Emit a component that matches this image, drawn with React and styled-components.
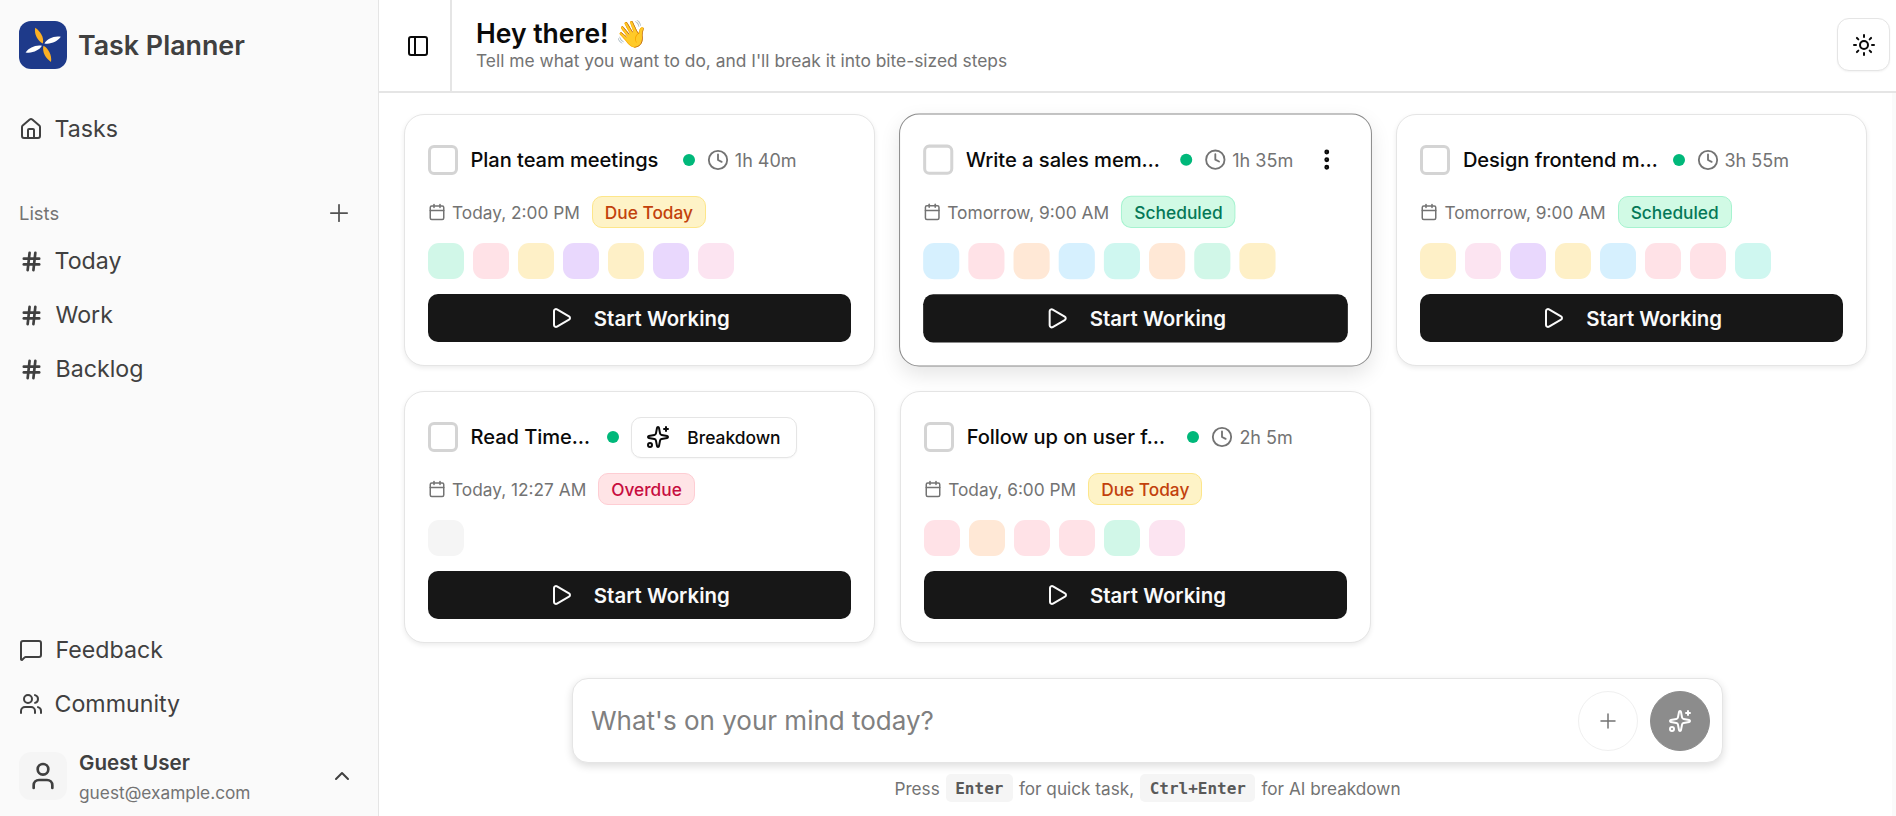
import React from 'react';
import styled, { createGlobalStyle } from 'styled-components';
import { Home, Hash, Plus, MessageSquare, Users, User, ChevronUp, PanelLeft, Sun, Calendar, Clock, Play, Sparkles, EllipsisVertical } from 'lucide-react';

const Global = createGlobalStyle`
  html, body { margin: 0; padding: 0; height: 100%; background: #fff; }
  body { font-family: Inter, "Noto Sans", sans-serif; overflow: hidden; }
  * { box-sizing: border-box; }
`;

const Shell = styled.div`display: flex; width: 1896px; height: 816px; overflow: hidden;`;

const Sidebar = styled.aside`
  width: 379px; flex: none; height: 816px; background: #fafafa; border-right: 1px solid #e5e5e5;
  display: flex; flex-direction: column; padding: 21px 19px 16px; color: #404040;
`;
const Brand = styled.div`display: flex; align-items: center; gap: 11px; height: 48px; margin-bottom: 48px;`;
const BrandName = styled.div`font-size: 26.8px; font-weight: 600; color: #404040;`;
const NavRow = styled.div`
  display: flex; align-items: center; height: 24px; font-size: 23.2px; color: #404040; gap: ${p => p.$gap || 11.5}px;
  margin-bottom: ${p => p.$mb || 0}px;
`;
const IconSlot = styled.span`width: 24px; display: flex; justify-content: center; flex: none; color: #404040;`;
const ListHead = styled.div`
  display: flex; align-items: center; justify-content: space-between; height: 24px; margin: 60px 6px 24px 0;
  font-size: 18.4px; color: #737373;
`;
const Spacer = styled.div`flex: 1;`;
const UserRow = styled.div`display: flex; align-items: center; gap: 12px; height: 48px; margin-top: 36px;`;
const Avatar = styled.div`
  width: 48px; height: 48px; border-radius: 12px; background: #f5f5f5; display: flex; align-items: center; justify-content: center; color: #404040;
`;
const UserText = styled.div`flex: 1; display: flex; flex-direction: column; gap: 7.5px; padding-top: 2px;`;
const UserName = styled.div`font-size: 20.6px; font-weight: 600; color: #404040; line-height: 24px;`;
const UserMail = styled.div`font-size: 17.3px; color: #737373; line-height: 21px;`;

const Main = styled.main`flex: 1; min-width: 0; display: flex; flex-direction: column;`;
const Header = styled.header`
  height: 93px; flex: none; border-bottom: 2px solid #e5e5e5; display: flex; align-items: stretch; padding-right: 6px;
`;
const ToggleCell = styled.div`
  width: 73px; padding-left: 6px; border-right: 2px solid #e5e5e5; display: flex; align-items: center; justify-content: center; color: #0a0a0a;
`;
const HeaderText = styled.div`flex: 1; padding: 15px 0 0 24px;`;
const Heading = styled.h1`
  margin: 0; font-size: 26.5px; font-weight: 600; color: #0a0a0a; line-height: 36px;
`;
const Sub = styled.p`margin: -1px 0 0; font-size: 17.36px; color: #737373; line-height: 22px;`;
const ThemeButton = styled.div`
  width: 53px; height: 53px; margin-top: 18px; border: 1px solid #e5e5e5; border-radius: 12px; background: #fff;
  display: flex; align-items: center; justify-content: center; color: #0a0a0a; box-shadow: 0 1px 2px rgba(0,0,0,.05);
`;

const Board = styled.div`flex: 1; min-height: 0; display: flex; flex-direction: column; padding: 21px 25px 0 25px; border-right: 4px solid #fafafa;`;
const Grid = styled.div`display: grid; grid-template-columns: repeat(3, minmax(0, 1fr)); gap: 25px 25.6px; flex: 1; align-content: start;`;

const Card = styled.div`
  height: 252px; border-radius: 20px; background: #fff; padding: 30px 23px 0 23px;
  border: 1px solid ${p => p.$active ? '#8a8a8a' : '#e5e5e5'};
  box-shadow: ${p => p.$active ? '0 8px 20px rgba(0,0,0,.10)' : '0 2px 5px rgba(0,0,0,.08)'};
  ${p => p.$active && 'transform: scale(1.004);'}
`;
const TitleRow = styled.div`display: flex; align-items: center; height: 30px; position: relative; padding-right: 54px;`;
const Check = styled.div`width: 30px; height: 30px; border: 3px solid #d4d4d4; border-radius: 6px; flex: none; margin-right: 12.5px;`;
const Title = styled.div`
  font-size: 20.1px; font-weight: 500; letter-spacing: -0.05px; color: #0a0a0a; white-space: nowrap; overflow: hidden; text-overflow: ellipsis; min-width: 0; flex: 1 1 0;
`;
const Dot = styled.span`width: 12px; height: 12px; border-radius: 50%; background: #00b87a; flex: none; margin: 0 12px 0 11px;`;
const Duration = styled.div`display: flex; align-items: center; gap: 6px; font-size: 18px; color: #737373; flex: none; white-space: nowrap;`;
const MenuDots = styled.span`position: absolute; right: 8px; top: 2px; width: 26px; height: 26px; color: #0a0a0a; display: flex;`;
const Breakdown = styled.div`
  display: flex; align-items: center; gap: 17px; height: 41px; padding: 0 15px 0 14px; border: 1px solid #e5e5e5; border-radius: 10px;
  font-size: 17.4px; font-weight: 500; color: #0a0a0a; flex: none; background: #fff; white-space: nowrap; box-shadow: 0 1px 2px rgba(0,0,0,.04);
`;
const MetaRow = styled.div`display: flex; align-items: center; height: 32px; margin-top: 21px; font-size: 17.3px; color: #737373;`;
const DateText = styled.span`margin-left: 6px; margin-right: 12px; white-space: nowrap;`;
const TONES = {
  due: ['#fef3c7', '#fde68a', '#c2410c'],
  scheduled: ['#d1fae5', '#a7f3d0', '#047857'],
  overdue: ['#ffe4e6', '#fecdd3', '#c70d3f'],
};
const Badge = styled.span`
  height: 32px; padding: 0 12px; border-radius: 10px; display: inline-flex; align-items: center; font-size: 17.3px; font-weight: 500;
  background: ${p => TONES[p.$tone][0]}; border: 1px solid ${p => TONES[p.$tone][1]}; color: ${p => TONES[p.$tone][2]};
`;
const Swatches = styled.div`display: flex; gap: 9px; margin-top: 15px; height: 36px;`;
const Swatch = styled.span`width: 36px; height: 36px; border-radius: 11px; background: ${p => p.$c};`;
const StartButton = styled.div`
  margin-top: 15px; height: 48px; border-radius: 10px; background: #171717; color: #fafafa; display: flex; align-items: center; justify-content: center;
  gap: 21px; font-size: 20.4px; font-weight: 600;
`;

const Composer = styled.div`margin: 0 0 0 168px; width: 1151px; flex: none;`;
const InputBox = styled.div`
  height: 85px; border: 1px solid #e5e5e5; border-radius: 16px; background: #fff; box-shadow: 0 3px 8px rgba(0,0,0,.14);
  display: flex; align-items: center; padding: 0 12px 0 18px; gap: 12px;
`;
const Placeholder = styled.div`flex: 1; font-size: 26px; color: #808080;`;
const RoundBtn = styled.div`
  width: 60px; height: 60px; border-radius: 50%; display: flex; align-items: center; justify-content: center; flex: none;
  background: ${p => p.$fill ? '#8c8c8c' : '#fff'}; color: ${p => p.$fill ? '#fff' : '#737373'};
  border: 1px solid ${p => p.$fill ? '#8c8c8c' : '#f0f0f0'};
`;
const Hint = styled.div`
  display: flex; align-items: center; justify-content: center; gap: 6px; height: 28px; margin: 11px 0 14px; font-size: 17.2px; color: #737373;
`;
const Kbd = styled.kbd`
  font-family: "DejaVu Sans Mono", monospace; font-weight: 700; font-size: 16px; background: #f5f5f5; color: #595959; border-radius: 5px;
  height: 28px; padding: 0 9.5px; display: inline-flex; align-items: center;
`;

const Logo = () => (
  <svg width="48" height="48" viewBox="0 0 48 48">
    <rect width="48" height="48" rx="12" fill="#1e3a8a" />
    <path d="M16.200 6.800C21 10 25.400 16 23.800 22.600 19 20.400 14.800 13.400 16.200 6.800Z" fill="#fbb024" />
    <path d="M32 41C27.200 37.800 22.800 31.400 24.400 24.800 29.200 27.200 33.200 34.400 32 41Z" fill="#fbb024" />
    <path d="M41.800 15.800C38.400 20.400 31.800 23.600 25.400 22.400 28 18 35.200 14.400 41.800 15.800Z" fill="#fff" />
    <path d="M6.600 31.400C10 26.800 16.600 23.600 23 24.800 20.400 29.200 13 32.800 6.600 31.400Z" fill="#fff" />
  </svg>
);

const tasks = [
  { title: 'Plan team meetings', time: '1h 40m', date: 'Today, 2:00 PM', status: 'Due Today', tone: 'due', colors: ['#d1f7e8', '#ffe2e7', '#fef0c7', '#e9d8fd', '#fef0c7', '#e9d8fd', '#fce4f1'] },
  { title: 'Write a sales mem…', time: '1h 35m', date: 'Tomorrow, 9:00 AM', status: 'Scheduled', tone: 'scheduled', active: true, colors: ['#d6f0fe', '#ffe2e7', '#ffe8d6', '#d6f0fe', '#cff7f0', '#ffe8d6', '#d1f7e8', '#fef0c7'] },
  { title: 'Design frontend m…', time: '3h 55m', date: 'Tomorrow, 9:00 AM', status: 'Scheduled', tone: 'scheduled', colors: ['#fef0c7', '#fce4f1', '#e9d8fd', '#fef0c7', '#d6f0fe', '#ffe2e7', '#ffe2e7', '#cff7f0'] },
  { title: 'Read Time…', breakdown: true, date: 'Today, 12:27 AM', status: 'Overdue', tone: 'overdue', colors: ['#f5f5f5'] },
  { title: 'Follow up on user f…', time: '2h 5m', date: 'Today, 6:00 PM', status: 'Due Today', tone: 'due', colors: ['#ffe2e7', '#ffe8d6', '#ffe2e7', '#ffe2e7', '#d1f7e8', '#fce4f1'] },
];

const TaskCard = ({ t }) => (
  <Card $active={t.active}>
    <TitleRow>
      <Check />
      <Title>{t.title}</Title>
      <Dot />
      {t.breakdown ? (
        <Breakdown><Sparkles size={24} strokeWidth={2} />Breakdown</Breakdown>
      ) : (
        <Duration><Clock size={22} strokeWidth={2} />{t.time}</Duration>
      )}
      {t.active && <MenuDots><EllipsisVertical size={26} strokeWidth={2.5} /></MenuDots>}
    </TitleRow>
    <MetaRow>
      <Calendar size={18} strokeWidth={2} />
      <DateText>{t.date}</DateText>
      <Badge $tone={t.tone}>{t.status}</Badge>
    </MetaRow>
    <Swatches>{t.colors.map((c, i) => <Swatch key={i} $c={c} />)}</Swatches>
    <StartButton><Play size={24} strokeWidth={2} />Start Working</StartButton>
  </Card>
);

export default function App() {
  return (
    <Shell>
      <Global />
      <Sidebar>
        <Brand><Logo /><BrandName>Task Planner</BrandName></Brand>
        <NavRow><IconSlot><Home size={24} strokeWidth={2} /></IconSlot>Tasks</NavRow>
        <ListHead>Lists<Plus size={28} strokeWidth={1.5} color="#525252" /></ListHead>
        <NavRow $mb={30}><IconSlot><Hash size={23} strokeWidth={2.8} /></IconSlot>Today</NavRow>
        <NavRow $mb={30} $gap={12.5}><IconSlot><Hash size={23} strokeWidth={2.8} /></IconSlot>Work</NavRow>
        <NavRow $gap={12.5}><IconSlot><Hash size={23} strokeWidth={2.8} /></IconSlot>Backlog</NavRow>
        <Spacer />
        <NavRow $mb={30} $gap={12.5}><IconSlot><MessageSquare size={24} strokeWidth={2} /></IconSlot>Feedback</NavRow>
        <NavRow><IconSlot><Users size={24} strokeWidth={2} /></IconSlot>Community</NavRow>
        <UserRow>
          <Avatar><User size={32} strokeWidth={2} /></Avatar>
          <UserText><UserName>Guest User</UserName><UserMail>guest@example.com</UserMail></UserText>
          <ChevronUp size={24} strokeWidth={2} style={{ marginRight: 5 }} />
        </UserRow>
      </Sidebar>
      <Main>
        <Header>
          <ToggleCell><PanelLeft size={24} strokeWidth={2} /></ToggleCell>
          <HeaderText>
            <Heading>Hey there! 👋</Heading>
            <Sub>Tell me what you want to do, and I'll break it into bite-sized steps</Sub>
          </HeaderText>
          <ThemeButton><Sun size={24} strokeWidth={2} /></ThemeButton>
        </Header>
        <Board>
          <Grid>{tasks.map((t, i) => <TaskCard key={i} t={t} />)}</Grid>
          <Composer>
            <InputBox>
              <Placeholder>What's on your mind today?</Placeholder>
              <RoundBtn><Plus size={24} strokeWidth={1.5} /></RoundBtn>
              <RoundBtn $fill><Sparkles size={24} strokeWidth={2} /></RoundBtn>
            </InputBox>
            <Hint>Press <Kbd>Enter</Kbd> for quick task, <Kbd>Ctrl+Enter</Kbd> for AI breakdown</Hint>
          </Composer>
        </Board>
      </Main>
    </Shell>
  );
}
